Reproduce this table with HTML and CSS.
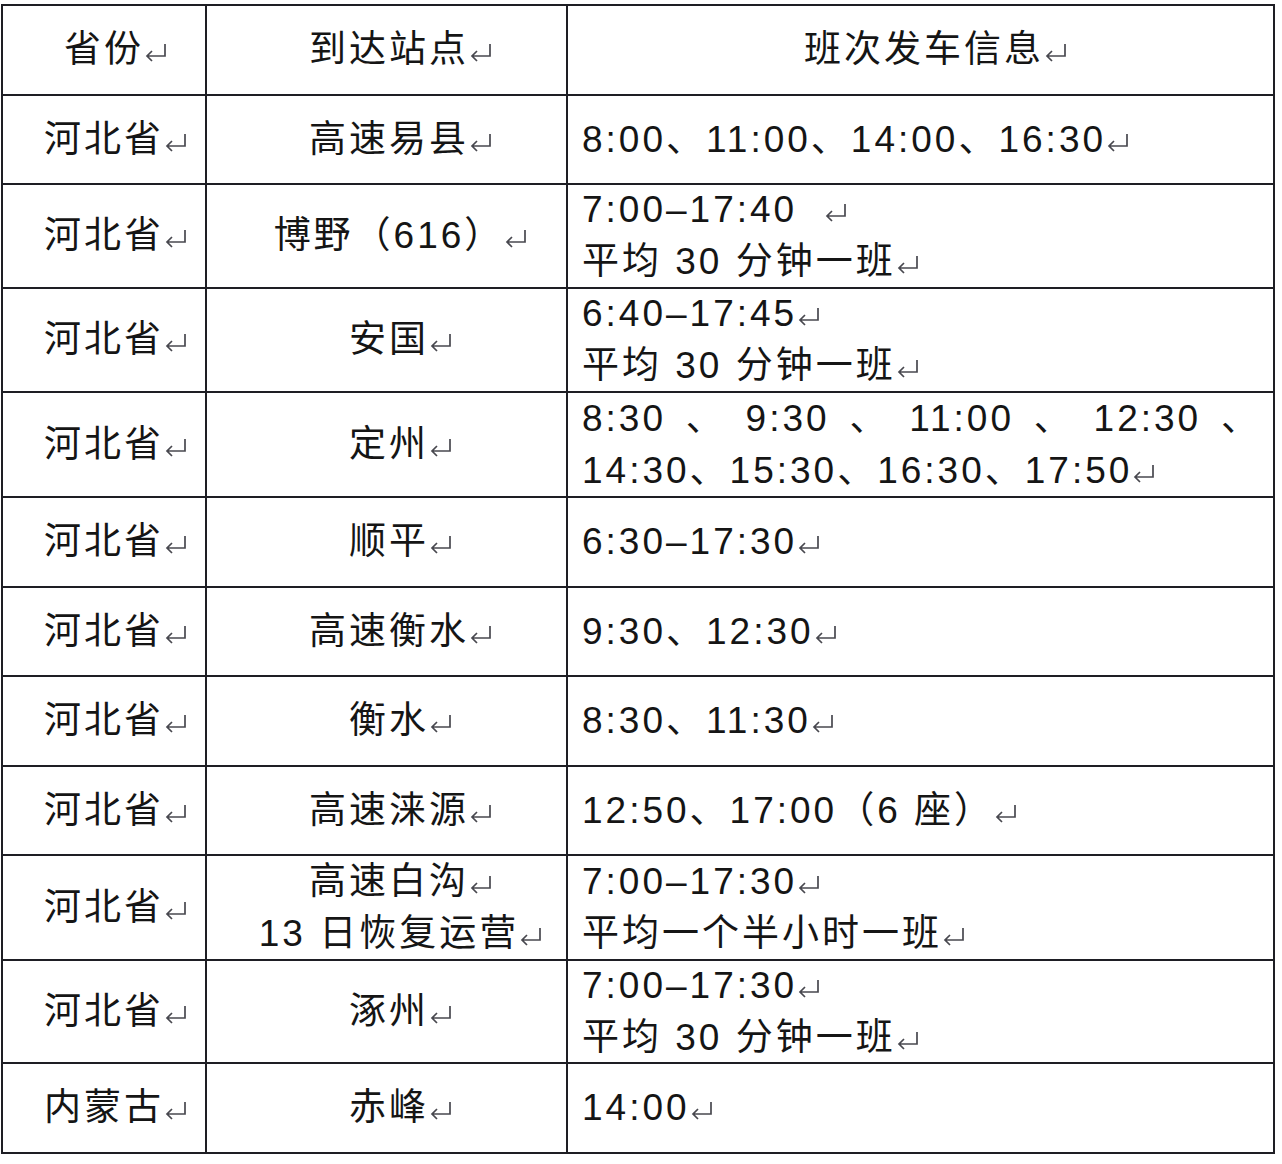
FILE: index.html
```html
<!DOCTYPE html>
<html lang="zh-CN">
<head>
<meta charset="utf-8">
<title>班次发车信息</title>
<link rel="stylesheet" href="styles.css">
</head>
<body>
<div class="sheet">
  <div class="cell c1 r-a"><div class="ln">省份<svg class="ret" viewBox="0 0 24 22"><path d="M21 3V15H3M8 10L3 15L8 20"/></svg></div></div>
  <div class="cell c2"><div class="ln">到达站点<svg class="ret" viewBox="0 0 24 22"><path d="M21 3V15H3M8 10L3 15L8 20"/></svg></div></div>
  <div class="cell c3h"><div class="ln">班次发车信息<svg class="ret" viewBox="0 0 24 22"><path d="M21 3V15H3M8 10L3 15L8 20"/></svg></div></div>

  <div class="cell c1"><div class="ln">河北省<svg class="ret" viewBox="0 0 24 22"><path d="M21 3V15H3M8 10L3 15L8 20"/></svg></div></div>
  <div class="cell c2"><div class="ln">高速易县<svg class="ret" viewBox="0 0 24 22"><path d="M21 3V15H3M8 10L3 15L8 20"/></svg></div></div>
  <div class="cell c3"><div class="ln">8:00、11:00、14:00、16:30<svg class="ret" viewBox="0 0 24 22"><path d="M21 3V15H3M8 10L3 15L8 20"/></svg></div></div>

  <div class="cell c1"><div class="ln">河北省<svg class="ret" viewBox="0 0 24 22"><path d="M21 3V15H3M8 10L3 15L8 20"/></svg></div></div>
  <div class="cell c2"><div class="ln">博野（616）<svg class="ret" viewBox="0 0 24 22"><path d="M21 3V15H3M8 10L3 15L8 20"/></svg></div></div>
  <div class="cell c3"><div class="ln">7:00–17:40 &nbsp;<svg class="ret" viewBox="0 0 24 22"><path d="M21 3V15H3M8 10L3 15L8 20"/></svg></div><div class="ln">平均 30 分钟一班<svg class="ret" viewBox="0 0 24 22"><path d="M21 3V15H3M8 10L3 15L8 20"/></svg></div></div>

  <div class="cell c1"><div class="ln">河北省<svg class="ret" viewBox="0 0 24 22"><path d="M21 3V15H3M8 10L3 15L8 20"/></svg></div></div>
  <div class="cell c2"><div class="ln">安国<svg class="ret" viewBox="0 0 24 22"><path d="M21 3V15H3M8 10L3 15L8 20"/></svg></div></div>
  <div class="cell c3"><div class="ln">6:40–17:45<svg class="ret" viewBox="0 0 24 22"><path d="M21 3V15H3M8 10L3 15L8 20"/></svg></div><div class="ln">平均 30 分钟一班<svg class="ret" viewBox="0 0 24 22"><path d="M21 3V15H3M8 10L3 15L8 20"/></svg></div></div>

  <div class="cell c1"><div class="ln">河北省<svg class="ret" viewBox="0 0 24 22"><path d="M21 3V15H3M8 10L3 15L8 20"/></svg></div></div>
  <div class="cell c2"><div class="ln">定州<svg class="ret" viewBox="0 0 24 22"><path d="M21 3V15H3M8 10L3 15L8 20"/></svg></div></div>
  <div class="cell c3"><div class="ln spread"><span>8:30</span><span>、</span><span>9:30</span><span>、</span><span>11:00</span><span>、</span><span>12:30</span><span>、</span></div><div class="ln">14:30、15:30、16:30、17:50<svg class="ret" viewBox="0 0 24 22"><path d="M21 3V15H3M8 10L3 15L8 20"/></svg></div></div>

  <div class="cell c1"><div class="ln">河北省<svg class="ret" viewBox="0 0 24 22"><path d="M21 3V15H3M8 10L3 15L8 20"/></svg></div></div>
  <div class="cell c2"><div class="ln">顺平<svg class="ret" viewBox="0 0 24 22"><path d="M21 3V15H3M8 10L3 15L8 20"/></svg></div></div>
  <div class="cell c3"><div class="ln">6:30–17:30<svg class="ret" viewBox="0 0 24 22"><path d="M21 3V15H3M8 10L3 15L8 20"/></svg></div></div>

  <div class="cell c1"><div class="ln">河北省<svg class="ret" viewBox="0 0 24 22"><path d="M21 3V15H3M8 10L3 15L8 20"/></svg></div></div>
  <div class="cell c2"><div class="ln">高速衡水<svg class="ret" viewBox="0 0 24 22"><path d="M21 3V15H3M8 10L3 15L8 20"/></svg></div></div>
  <div class="cell c3"><div class="ln">9:30、12:30<svg class="ret" viewBox="0 0 24 22"><path d="M21 3V15H3M8 10L3 15L8 20"/></svg></div></div>

  <div class="cell c1"><div class="ln">河北省<svg class="ret" viewBox="0 0 24 22"><path d="M21 3V15H3M8 10L3 15L8 20"/></svg></div></div>
  <div class="cell c2"><div class="ln">衡水<svg class="ret" viewBox="0 0 24 22"><path d="M21 3V15H3M8 10L3 15L8 20"/></svg></div></div>
  <div class="cell c3"><div class="ln">8:30、11:30<svg class="ret" viewBox="0 0 24 22"><path d="M21 3V15H3M8 10L3 15L8 20"/></svg></div></div>

  <div class="cell c1"><div class="ln">河北省<svg class="ret" viewBox="0 0 24 22"><path d="M21 3V15H3M8 10L3 15L8 20"/></svg></div></div>
  <div class="cell c2"><div class="ln">高速涞源<svg class="ret" viewBox="0 0 24 22"><path d="M21 3V15H3M8 10L3 15L8 20"/></svg></div></div>
  <div class="cell c3"><div class="ln">12:50、17:00（6 座）<svg class="ret" viewBox="0 0 24 22"><path d="M21 3V15H3M8 10L3 15L8 20"/></svg></div></div>

  <div class="cell c1"><div class="ln">河北省<svg class="ret" viewBox="0 0 24 22"><path d="M21 3V15H3M8 10L3 15L8 20"/></svg></div></div>
  <div class="cell c2"><div class="ln">高速白沟<svg class="ret" viewBox="0 0 24 22"><path d="M21 3V15H3M8 10L3 15L8 20"/></svg></div><div class="ln">13 日恢复运营<svg class="ret" viewBox="0 0 24 22"><path d="M21 3V15H3M8 10L3 15L8 20"/></svg></div></div>
  <div class="cell c3"><div class="ln">7:00–17:30<svg class="ret" viewBox="0 0 24 22"><path d="M21 3V15H3M8 10L3 15L8 20"/></svg></div><div class="ln">平均一个半小时一班<svg class="ret" viewBox="0 0 24 22"><path d="M21 3V15H3M8 10L3 15L8 20"/></svg></div></div>

  <div class="cell c1"><div class="ln">河北省<svg class="ret" viewBox="0 0 24 22"><path d="M21 3V15H3M8 10L3 15L8 20"/></svg></div></div>
  <div class="cell c2"><div class="ln">涿州<svg class="ret" viewBox="0 0 24 22"><path d="M21 3V15H3M8 10L3 15L8 20"/></svg></div></div>
  <div class="cell c3"><div class="ln">7:00–17:30<svg class="ret" viewBox="0 0 24 22"><path d="M21 3V15H3M8 10L3 15L8 20"/></svg></div><div class="ln">平均 30 分钟一班<svg class="ret" viewBox="0 0 24 22"><path d="M21 3V15H3M8 10L3 15L8 20"/></svg></div></div>

  <div class="cell c1"><div class="ln">内蒙古<svg class="ret" viewBox="0 0 24 22"><path d="M21 3V15H3M8 10L3 15L8 20"/></svg></div></div>
  <div class="cell c2"><div class="ln">赤峰<svg class="ret" viewBox="0 0 24 22"><path d="M21 3V15H3M8 10L3 15L8 20"/></svg></div></div>
  <div class="cell c3"><div class="ln">14:00<svg class="ret" viewBox="0 0 24 22"><path d="M21 3V15H3M8 10L3 15L8 20"/></svg></div></div>
</div>
</body>
</html>
```

FILE: styles.css
```css
html, body {
  margin: 0;
  padding: 0;
  background: #ffffff;
}

body {
  padding: 4px 0 0 1px;
  font-family: "Liberation Sans", "Noto Sans CJK SC", sans-serif;
  font-size: 37px;
  letter-spacing: 3px;
  color: #151515;
}

.sheet {
  display: grid;
  grid-template-columns: 202px 359px 705px;
  grid-template-rows: 88px 87px 102px 102px 103px 88px 87px 88px 87px 103px 101px 88px;
  gap: 2px;
  padding: 2px;
  width: max-content;
  background: #1e1e24;
}

.cell {
  background: #ffffff;
  display: flex;
  flex-direction: column;
  justify-content: center;
  white-space: nowrap;
}

.ln {
  line-height: 52px;
}

.c1 {
  text-align: center;
  padding-left: 24px;
}

.c2 {
  text-align: center;
  padding-left: 29px;
}

.c3h {
  text-align: center;
  padding-left: 31px;
}

.c3 {
  text-align: left;
  padding-left: 14px;
  padding-right: 12px;
}

.spread {
  display: flex;
  justify-content: space-between;
}

.ret {
  width: 24px;
  height: 22px;
  vertical-align: -1px;
  fill: none;
  stroke: #48484f;
  stroke-width: 1.7;
}
```
